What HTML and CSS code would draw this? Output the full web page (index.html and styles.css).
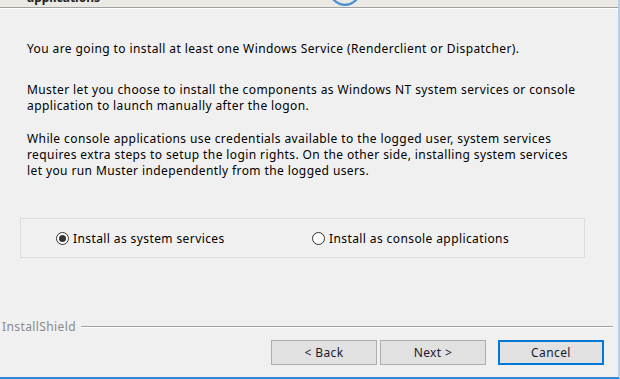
FILE: index.html
```html
<!DOCTYPE html>
<html lang="en">
<head>
    <meta charset="UTF-8">
    <title>Setup - Service Type</title>
    <link rel="stylesheet" href="styles.css">
</head>
<body>
    <div class="window">
        <div class="banner">
            <span class="banner-title">applications</span>
            <svg class="banner-logo" width="34" height="10" viewBox="0 0 34 10">
                <path d="M2 -10 A15 15 0 0 0 32 -10 M3 -6 A14.5 14.5 0 0 0 31 -6" fill="none" stroke="#4a90d6" stroke-width="2"/>
            </svg>
        </div>

        <div class="main">
            <p class="intro">You are going to install at least one Windows Service (Renderclient or Dispatcher).</p>
            <p class="mid">Muster let you choose to install the components as Windows NT system services or console application to launch manually after the logon.</p>
            <p>While console applications use credentials available to the logged user, system services requires extra steps to setup the login rights. On the other side, installing system services let you run Muster independently from the logged users.</p>

            <div class="options">
                <label class="option first">
                    <span class="radio checked"></span>Install as system services
                </label>
                <label class="option">
                    <span class="radio"></span>Install as console applications
                </label>
            </div>
        </div>

        <div class="brand">
            <span class="brand-name">InstallShield</span>
            <span class="brand-line"></span>
        </div>

        <div class="buttons">
            <button class="btn">&lt; Back</button>
            <button class="btn">Next &gt;</button>
            <button class="btn default">Cancel</button>
        </div>
    </div>
</body>
</html>
```

FILE: styles.css
```css
body {
    margin: 0;
    padding: 0;
    background-color: #f0f0f0;
    font-family: "Noto Sans", "Liberation Sans", Arial, sans-serif;
    font-size: 12px;
    letter-spacing: 0.4px;
    color: #000;
}
.window {
    width: 618px;
    height: 377px;
    border-right: 2px solid #b7cfe8;
    border-bottom: 2px solid #2b87d6;
    display: flex;
    flex-direction: column;
    overflow: hidden;
}
.banner {
    position: relative;
    height: 7px;
    flex-shrink: 0;
    background-color: #eae9e4;
    border-bottom: 1px solid #a0a0a0;
    box-shadow: 0 1px 0 #fff;
    overflow: hidden;
}
.banner-title {
    display: block;
    margin: -10px 0 0 27px;
    font-weight: bold;
    font-size: 12px;
    letter-spacing: 0;
    line-height: 15px;
    color: #222;
}
.banner-logo {
    position: absolute;
    left: 328px;
    top: 0;
}
.main {
    padding: 33px 0 0 27px;
    height: 275px;
    flex-shrink: 0;
    box-sizing: border-box;
}
.main p {
    margin: 0 0 17px;
    line-height: 16px;
    width: 557px;
}
.main p.intro {
    margin-bottom: 25px;
    width: 580px;
}
.options {
    margin: 39px 0 0 -7px;
    width: 565px;
    height: 40px;
    box-sizing: border-box;
    border: 1px solid #dcdcdc;
    display: flex;
    align-items: center;
}
.option {
    display: flex;
    align-items: center;
    gap: 4px;
    width: 256px;
}
.option.first {
    margin-left: 35px;
}
.radio {
    width: 13px;
    height: 13px;
    box-sizing: border-box;
    border: 1px solid #333;
    border-radius: 50%;
    background-color: #fff;
    display: inline-block;
    position: relative;
}
.radio.checked::after {
    content: "";
    position: absolute;
    left: 2px;
    top: 2px;
    width: 7px;
    height: 7px;
    border-radius: 50%;
    background-color: #333;
}
.brand {
    display: flex;
    align-items: center;
    gap: 5px;
    padding: 0 5px 0 2px;
    height: 18px;
    margin-top: 34px;
}
.brand-name {
    color: #8a8a8a;
}
.brand-line {
    flex: 1;
    height: 1px;
    background-color: #a0a0a0;
    box-shadow: 0 1px 0 #fff;
}
.buttons {
    display: flex;
    padding: 5px 0 0 271px;
}
.btn {
    width: 106px;
    height: 25px;
    margin-right: 3px;
    padding: 0;
    background-color: #e1e1e1;
    border: 1px solid #adadad;
    font-family: "Noto Sans", "Liberation Sans", Arial, sans-serif;
    font-size: 12px;
    letter-spacing: 0.4px;
    color: #1a1a2e;
}
.btn.default {
    margin-left: 9px;
    border: 2px solid #0078d7;
}
```
